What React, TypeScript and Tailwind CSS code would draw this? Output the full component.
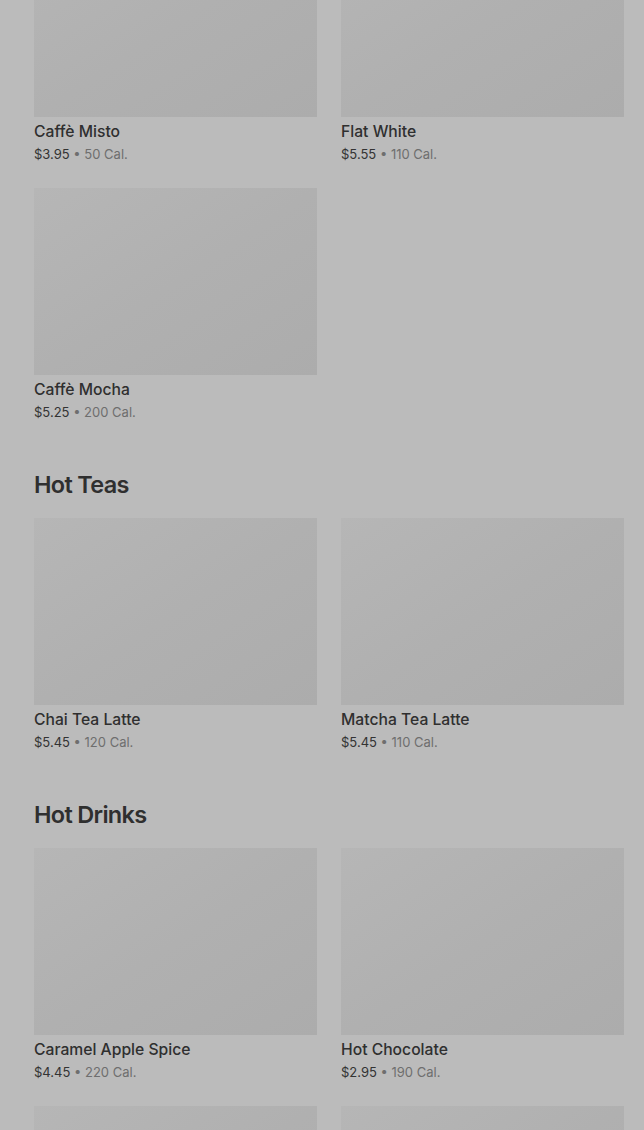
type Item = { name: string; price: string; cal: string };

const coffee: Item[] = [
  { name: "Caffè Misto", price: "$3.95", cal: "50 Cal." },
  { name: "Flat White", price: "$5.55", cal: "110 Cal." },
  { name: "Caffè Mocha", price: "$5.25", cal: "200 Cal." },
];

const teas: Item[] = [
  { name: "Chai Tea Latte", price: "$5.45", cal: "120 Cal." },
  { name: "Matcha Tea Latte", price: "$5.45", cal: "110 Cal." },
];

const drinks: Item[] = [
  { name: "Caramel Apple Spice", price: "$4.45", cal: "220 Cal." },
  { name: "Hot Chocolate", price: "$2.95", cal: "190 Cal." },
  { name: "", price: "", cal: "" },
  { name: "", price: "", cal: "" },
];

const Card = ({ item }: { item: Item }) => (
  <div className="flex flex-col">
    <div className="h-[187px] w-full bg-gradient-to-br from-[#b6b6b6] via-[#b0b0b0] to-[#acacac]" />
    {item.name && (
      <>
        <div className="mt-[3px] text-[15.7px] leading-6 font-medium text-[#2f2f2f]">{item.name}</div>
        <div className="text-[13px] leading-5 text-[#333]">
          {item.price}
          <span className="text-[#6e6e6e]"> • {item.cal}</span>
        </div>
      </>
    )}
  </div>
);

const Section = ({ title, items }: { title?: string; items: Item[] }) => (
  <div className="flex flex-col">
    {title && (
      <h2 className="mt-[47px] mb-[17px] text-[23.5px] leading-8 font-semibold tracking-[-0.7px] text-[#2f2f2f]">{title}</h2>
    )}
    <div className="grid grid-cols-2 gap-x-6 gap-y-6">
      {items.map((it, i) => (
        <Card key={i} item={it} />
      ))}
    </div>
  </div>
);

export default function App() {
  return (
    <div className="h-[1130px] w-full overflow-hidden bg-[#bbbbbb] font-['Inter',sans-serif]">
      <div className="-mt-[70px] pl-[34px] pr-[20px]">
        <Section items={coffee} />
        <Section title="Hot Teas" items={teas} />
        <Section title="Hot Drinks" items={drinks} />
      </div>
    </div>
  );
}
